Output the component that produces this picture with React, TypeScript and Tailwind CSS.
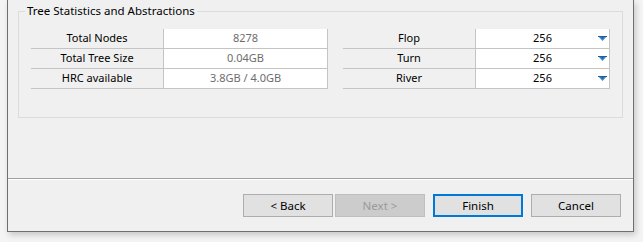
import React from "react";

interface StatRow {
  label: string;
  value: string;
}

// 왼쪽 통계 표
const STATS: StatRow[] = [
  { label: "Total Nodes", value: "8278" },
  { label: "Total Tree Size", value: "0.04GB" },
  { label: "HRC available", value: "3.8GB / 4.0GB" },
];

// 오른쪽 추상화 표
const ABSTRACTIONS: StatRow[] = [
  { label: "Flop", value: "256" },
  { label: "Turn", value: "256" },
  { label: "River", value: "256" },
];

const DropArrow: React.FC = () => (
  <svg width="9" height="5" viewBox="0 0 9 5" className="block">
    <path d="M0 0h9L4.5 5z" fill="#3c86c9" />
    <path d="M0 0h9v1H0z" fill="#1f5f9e" />
    <path d="M3 1h3L4.5 3z" fill="#245f99" />
  </svg>
);

const App: React.FC = () => {
  return (
    <div
      className="w-[643px] h-[242px] bg-[#f4f4f4] pl-[7px] text-[11px] text-black"
      style={{ fontFamily: '"Noto Sans", "Open Sans", sans-serif' }}
    >
      <div className="w-[627px] h-[232px] flex flex-col bg-[#f0f0f0] border-x border-b border-[#6f6f6f] shadow-[2px_3px_6px_rgba(0,0,0,0.18)]">
        {/* 그룹 박스 */}
        <fieldset className="mx-[10px] mt-[3px] border border-[#dcdcdc] px-[12px] pt-[10px] pb-[28px]">
          <legend className="-ml-[6px] px-[2px] leading-[16px] text-[11.5px]">
            Tree Statistics and Abstractions
          </legend>
          <div className="flex gap-[15px]">
            <div className="w-[297px] border-r border-[#c4c4c4]">
              {STATS.map((row) => (
                <div key={row.label} className="flex h-[20px] border-b border-[#c4c4c4]">
                  <div className="w-[133px] border-r border-[#c4c4c4] flex items-center justify-center">
                    {row.label}
                  </div>
                  <div className="flex-1 bg-white text-[#6d6d6d] flex items-center justify-center">
                    {row.value}
                  </div>
                </div>
              ))}
            </div>
            <div className="w-[267px] border-r border-[#c4c4c4]">
              {ABSTRACTIONS.map((row) => (
                <div key={row.label} className="flex h-[20px] border-b border-[#c4c4c4]">
                  <div className="w-[133px] border-r border-[#c4c4c4] flex items-center justify-center">
                    {row.label}
                  </div>
                  <div className="relative flex-1 bg-white flex items-center justify-center">
                    {row.value}
                    <div className="absolute right-[2px] top-[7px]">
                      <DropArrow />
                    </div>
                  </div>
                </div>
              ))}
            </div>
          </div>
        </fieldset>

        <div className="flex-1" />

        {/* 구분선 */}
        <div className="h-[1px] bg-[#a0a0a0]" />
        <div className="h-[1px] bg-white" />

        {/* 버튼 영역 */}
        <div className="flex justify-end pt-[14px] pb-[14px] pr-[12px] text-[11.5px]">
          <button className="w-[90px] h-[23px] border border-[#adadad] bg-[#e1e1e1]">
            &lt; Back
          </button>
          <button className="ml-[2px] w-[90px] h-[23px] border border-[#bfbfbf] bg-[#cccccc] text-[#9a9a9a]">
            Next &gt;
          </button>
          <button className="ml-[8px] w-[90px] h-[23px] border-2 border-[#0078d7] bg-[#e1e1e1]">
            Finish
          </button>
          <button className="ml-[8px] w-[90px] h-[23px] border border-[#adadad] bg-[#e1e1e1]">
            Cancel
          </button>
        </div>
      </div>
    </div>
  );
};

export default App;
